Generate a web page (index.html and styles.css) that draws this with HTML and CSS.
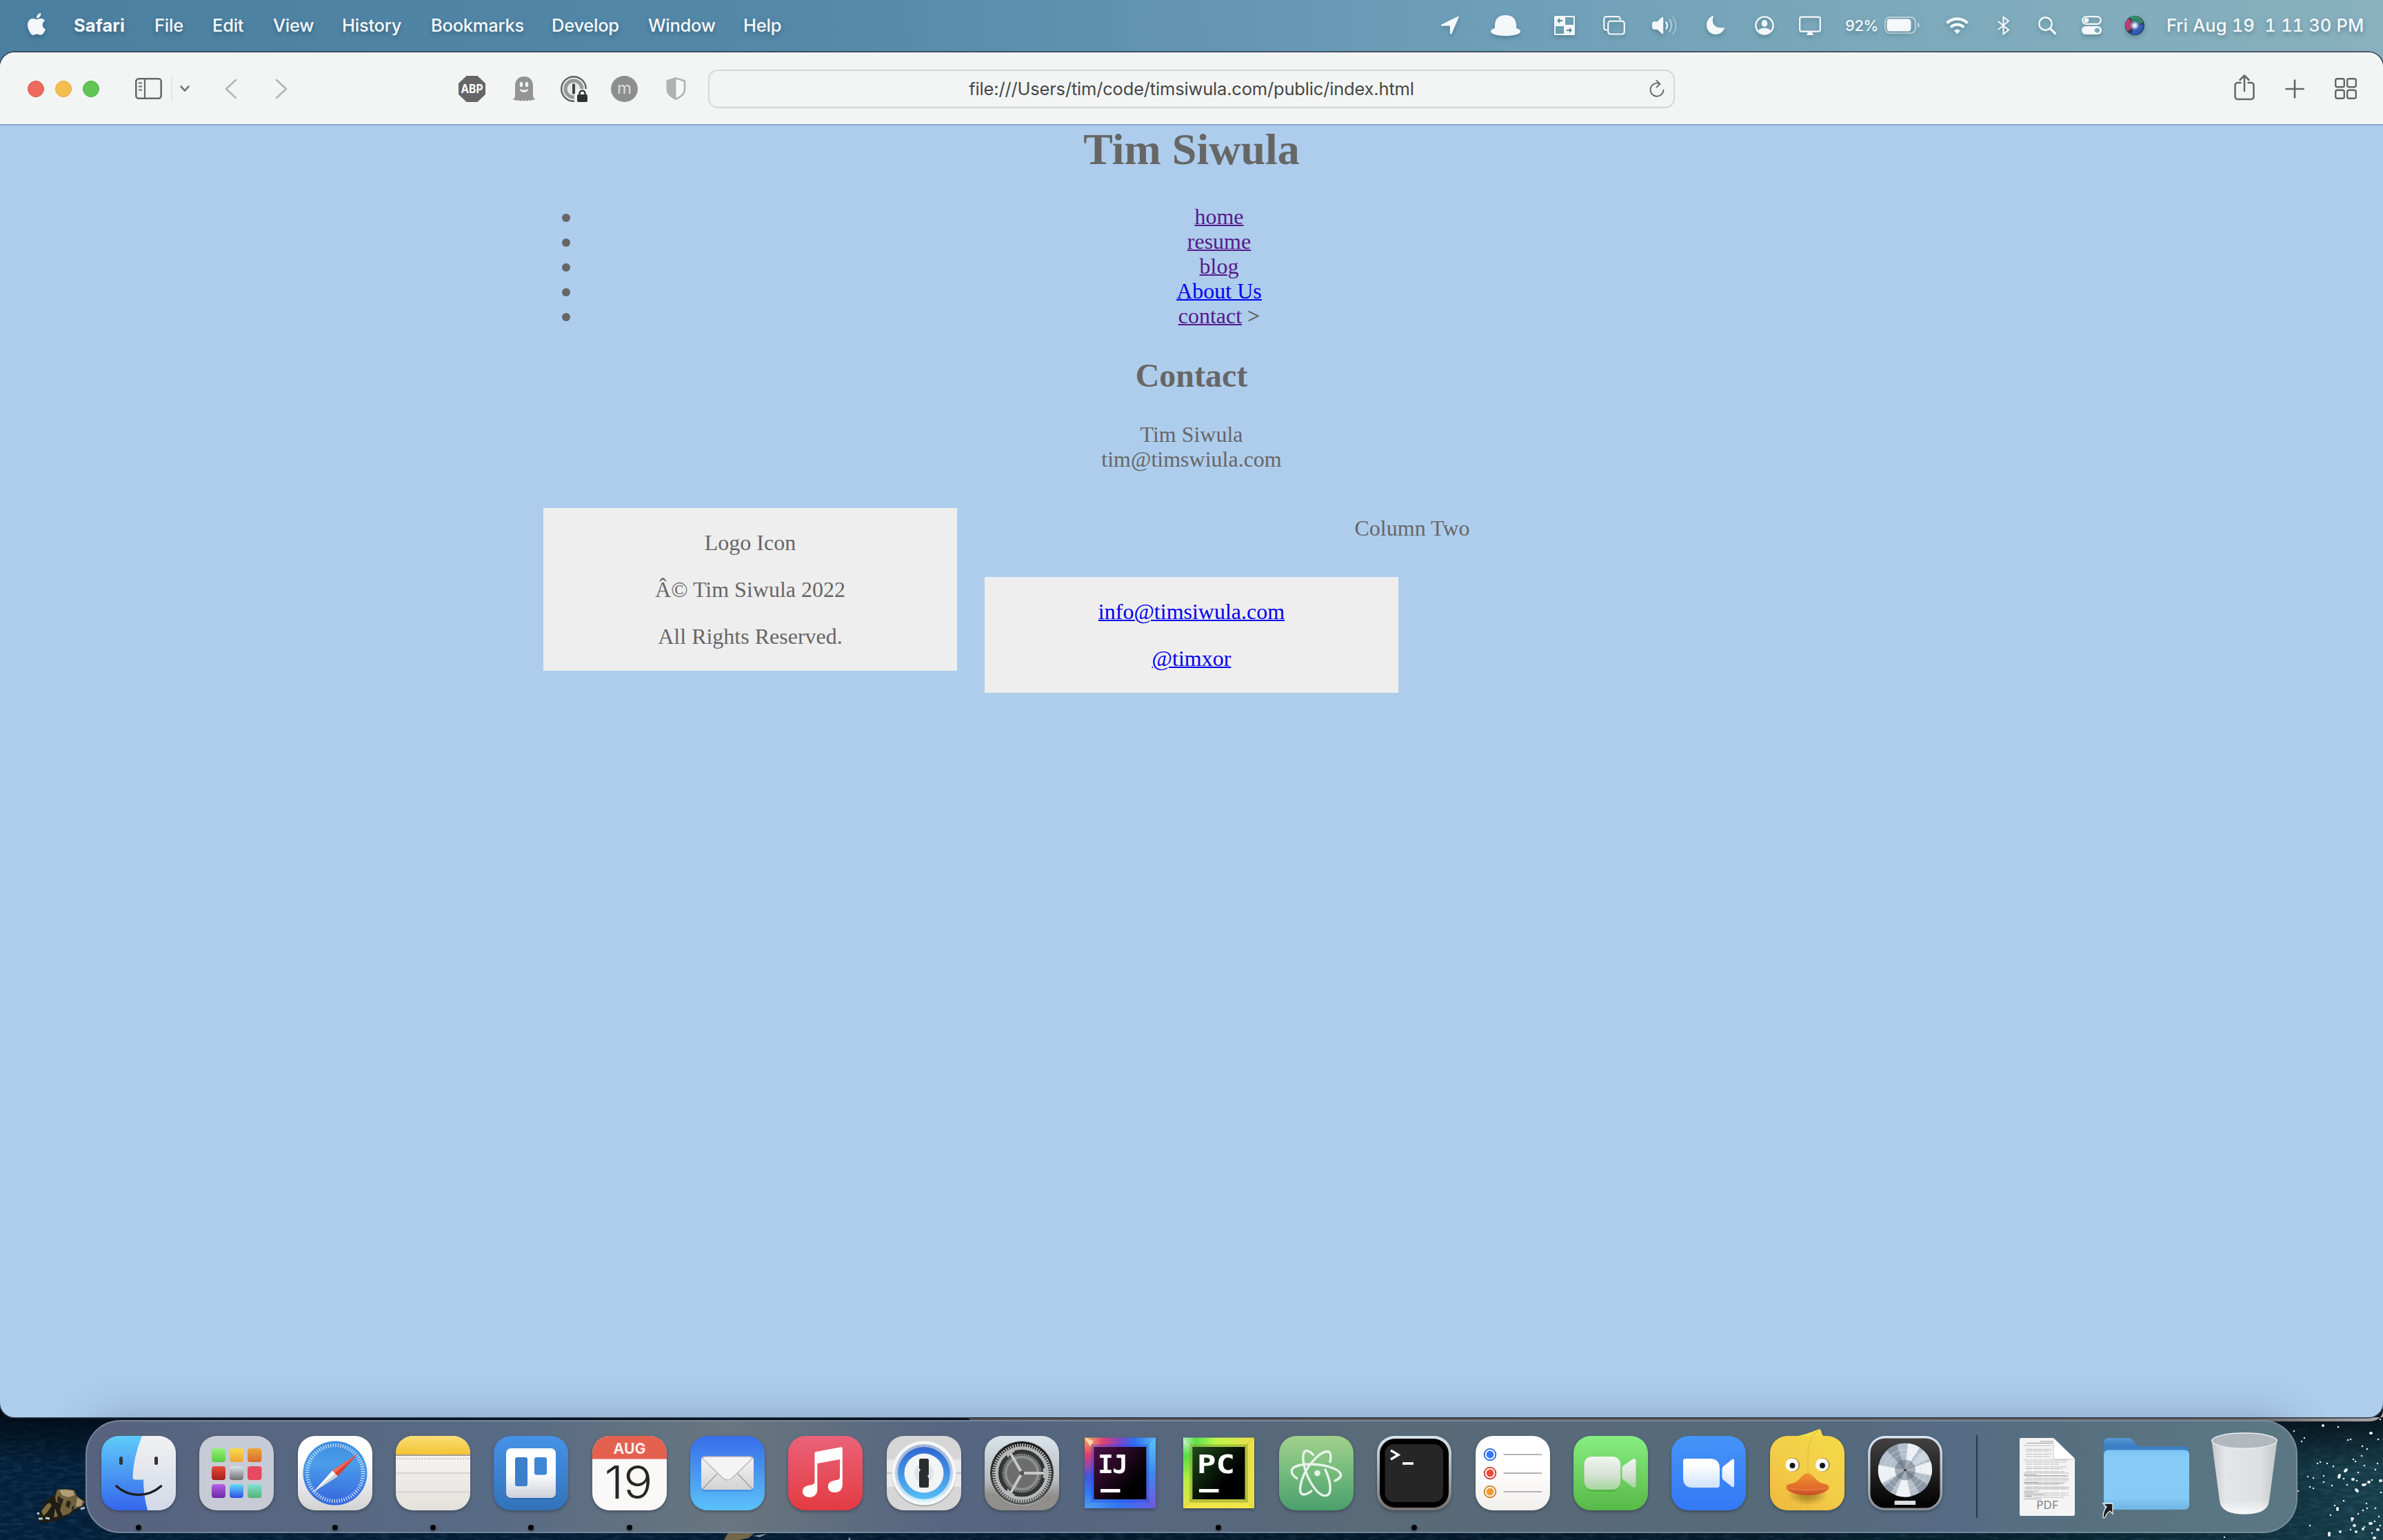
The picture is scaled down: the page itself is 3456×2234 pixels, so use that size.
FILE: index.html
```html
<!DOCTYPE html>
<html lang="en">
<head>
<meta charset="utf-8">
<title>Tim Siwula</title>
<link rel="stylesheet" href="styles.css">
</head>
<body>
<div class="desktop">

<svg class="wallpaper" width="3456" height="190" viewBox="0 2044 3456 190" aria-hidden="true">
  <defs>
    <linearGradient id="sea" x1="0" x2="1"><stop offset="0" stop-color="#03203b"/><stop offset=".3" stop-color="#021d34"/><stop offset=".6" stop-color="#02182a"/><stop offset=".85" stop-color="#04222f"/><stop offset="1" stop-color="#173c49"/></linearGradient>
    <linearGradient id="dim" x1="0" y1="0" x2="0" y2="1"><stop offset="0" stop-color="#000810" stop-opacity=".9"/><stop offset=".45" stop-color="#000810" stop-opacity="0"/></linearGradient>
    <filter id="waves" x="0" y="0" width="1" height="1"><feTurbulence type="fractalNoise" baseFrequency=".06 .22" numOctaves="3" seed="4"/><feColorMatrix values="0 0 0 0 .2  0 0 0 0 .42  0 0 0 0 .58  .9 0 0 0 -.36"/></filter>
    <linearGradient id="edge" x1="0" x2="1"><stop offset="0" stop-color="#605d5b"/><stop offset=".9" stop-color="#75706d"/><stop offset="1" stop-color="#a9a9a8"/></linearGradient>
  </defs>
  <rect y="2044" width="3456" height="190" fill="url(#sea)"/>
  <rect y="2044" width="3456" height="190" filter="url(#waves)" opacity=".35"/>
  <rect y="2044" width="3456" height="190" fill="url(#dim)"/>
  <path d="M54 2204l4-10 6-12 8-10 8-4 3-8 12 0 13 1 3 8 9 5 4 1-1 8-10 6-8 6-12 6-10 5-12 2-10 1z" fill="#201d17"/>
  <path d="M83 2161l13-1 12 2 3 8 8 6 4 2-4 7-12 4-7 7-9 3-4-8 2-9-8-3-1-8z" fill="#77653f"/>
  <path d="M86 2161l20 1 2 7-9 3-9-3zM112 2172l8 5-2 7-8 2z" fill="#b8a67c"/>
  <path d="M84 2170l8 5-3 9-6-6zM98 2176l5 3-3 9-5-4zM104 2186l5-2-5 8z" fill="#2a251b"/>
  <path d="M60 2192l8-10 4-2 3 4-6 9-6 6zM80 2188l4 12-6 1z" fill="#83703f"/>
  <path d="M56 2203l6 0M66 2202l6 1M54 2196l3-1M117 2189l6-2" stroke="#b9d0d6" stroke-width="3"/>
  <path d="M1050 2234l6-10h38l-8 7-14 3z" fill="#80724f"/>
  <path d="M1092 2228l20-3-10 5zM1230 2234l2-5 2 5z" fill="#8ea3a6"/>
  <path d="M1403 2056h2053v-12c0 12-8 18-22 18H1409z" fill="url(#edge)"/>
  <g stroke="#e9f3f5" stroke-linecap="round" fill="none">
    <path stroke-width="2.6" d="M3342 2086h0M3327 2076h0M3355 2144h0M3347 2142h0M3370 2141h0M3361 2123h0M3365 2121h0M3375 2123h0M3384 2127h0M3405 2089h0M3409 2088h0M3413 2117h0M3416 2120h0M3425 2112h0M3426 2098h0M3449 2088h0M3448 2123h0M3391 2070h0M3452 2059h0M3350 2157h0M3355 2159h0M3370 2150h0M3382 2155h0M3333 2163h0M3399 2145h0M3431 2153h0M3440 2147h0M3445 2132h0M3418 2148h0M3350 2213h0M3380 2198h0M3399 2177h0M3386 2184h0M3411 2206h0M3420 2196h0M3427 2191h0M3432 2181h0M3444 2207h0M3450 2200h0M3226 2230h0M3420 2136h0M3429 2126h0M3453 2165h0M3433 2188h0M3440 2224h0M3429 2215h0M3409 2219h0M3452 2213h0M3445 2188h0M3433 2102h0M3338 2091h0M3404 2154h0"/>
    <path stroke-width="4" d="M3392 2143l1-3M3401 2134l2-2M3412 2146h1M3427 2154h2M3417 2161l2 2M3438 2079h1M3369 2068h0M3435 2150h1M3390 2188v2M3411 2203h1M3414 2213h1M3417 2222h0M3437 2210h2M3448 2219h1M3378 2224v3M3443 2231h1M3427 2218h0M3394 2222h0M3452 2148h1"/>
  </g>
</svg>

<header class="menubar">
  <nav class="menus">
    <svg width="26" height="32" viewBox="2.2 0 19.6 24" fill="currentColor"><path d="M12.152 6.896c-.948 0-2.415-1.078-3.96-1.04-2.04.027-3.91 1.183-4.961 3.014-2.117 3.675-.546 9.103 1.519 12.09 1.013 1.454 2.208 3.09 3.792 3.039 1.52-.065 2.09-.987 3.935-.987 1.831 0 2.35.987 3.96.948 1.637-.026 2.676-1.48 3.676-2.948 1.156-1.688 1.636-3.325 1.662-3.415-.039-.013-3.182-1.221-3.22-4.857-.026-3.04 2.48-4.494 2.597-4.559-1.429-2.09-3.623-2.324-4.39-2.376-2-.156-3.675 1.09-4.61 1.09zM15.53 3.83c.843-1.012 1.4-2.427 1.245-3.83-1.207.052-2.662.805-3.532 1.818-.78.896-1.454 2.338-1.273 3.714 1.338.104 2.715-.688 3.559-1.701"/></svg>
    <span class="app-name">Safari</span><span>File</span><span>Edit</span><span>View</span><span>History</span><span>Bookmarks</span><span>Develop</span><span>Window</span><span>Help</span>
  </nav>
  <div class="status">
    <svg width="26" height="28" viewBox="0 0 26 28" fill="currentColor"><path d="M24 1c1.500-.6 2 .3 1.500 1.600L15.500 25.500c-.8 1.600-2.700 1.300-2.700-.5V14.500H1.500C-.2 14.500-.5 13 1 12.200z"/></svg>
    <svg width="43" height="30" viewBox="0 0 43 30" fill="currentColor"><path d="M6 19V15C6 5 12 0 21.500 0S37 5 37 15v4c4 1 6 2.500 6 4.500 0 4-10 6.500-21.500 6.500S0 27.500 0 23.500C0 21.500 2 20 6 19z"/></svg>
    <svg width="30" height="28" viewBox="0 0 30 28"><rect width="30" height="28" rx="1.500" fill="#f2f7f9"/><path d="M16 2h12v11H16zM2 15h12v11H2z" fill="#6c9fb3"/><path d="M4 7l4-4v3h4v2H8v3zM26 21l-4-4v3h-4v2h4v3z" fill="#4f88a2"/></svg>
    <svg width="32" height="28" viewBox="0 0 32 28" fill="none" stroke="currentColor" stroke-width="2.200"><path d="M6 20.500H4.500A3.300 3.300 0 0 1 1.200 17.200V4.500A3.300 3.300 0 0 1 4.500 1.200h17A3.300 3.300 0 0 1 24.800 4.500V6"/><rect x="7.200" y="7.700" width="23.600" height="18.800" rx="3.400"/></svg>
    <svg width="37" height="28" viewBox="0 0 37 28" fill="currentColor"><path d="M0 12c0-2.500 1-3.800 3.500-3.800h4L14 2.200c1.200-1 2.200-.6 2.200 1v21.600c0 1.600-1 2-2.200 1l-6.500-6h-4C1 19.800 0 18.500 0 16z"/><g fill="none" stroke="currentColor" stroke-width="2.400" stroke-linecap="round"><path d="M20.500 9.500q3 4.500 0 9"/><path d="M25.500 5.500q5.500 8.500 0 17" opacity=".5"/><path d="M30.500 2q8 12 0 24.500" opacity=".3"/></g></svg>
    <svg width="26" height="27" viewBox="0 0 26 27" fill="currentColor"><path d="M8.500.3c1-.7 1.800 0 1.400 1C6.500 10 11 18.500 24.500 17c1.200-.1 1.700.6 1.200 1.600A14 14 0 0 1 13.500 27C6 27 0 21.500 0 13.500 0 7.500 3.500 2.500 8.500.3z"/></svg>
    <svg width="28" height="28" viewBox="0 0 28 28"><circle cx="14" cy="14" r="12.600" fill="none" stroke="currentColor" stroke-width="2.400"/><ellipse cx="14" cy="11" rx="4.300" ry="5" fill="currentColor"/><path d="M5 22q2-4.500 9-4.500t9 4.500q-4 4.500-9 4.500T5 22z" fill="currentColor"/></svg>
    <svg width="32" height="28" viewBox="0 0 32 28"><rect x="1.200" y="1.700" width="29.600" height="21" rx="2.600" fill="none" stroke="currentColor" stroke-width="2.200"/><path d="M12.500 23.500h7v3h1.500V28H11v-1.500h1.500z" fill="currentColor"/></svg>
    <span class="percent">92%</span>
    <svg width="51" height="25" viewBox="0 0 51 25"><rect x="1" y="1" width="44" height="23" rx="7" fill="none" stroke="currentColor" stroke-width="2" opacity=".5"/><rect x="3.500" y="3.500" width="35" height="18" rx="4.500" fill="currentColor"/><path d="M48 8.500q3 1 3 4t-3 4z" fill="currentColor" opacity=".5"/></svg>
    <svg width="33" height="26" viewBox="0 0 33 26"><g fill="none" stroke="currentColor" stroke-width="4.200"><path d="M1.500 9.500a21.500 21.500 0 0 1 30 0"/><path d="M7 15.500a13.500 13.500 0 0 1 19 0"/></g><path d="M16.500 25.500l-4.500-5q4.500-4 9 0z" fill="currentColor"/></svg>
    <svg width="18" height="28" viewBox="0 0 18 28" fill="none" stroke="currentColor" stroke-width="2.200" stroke-linejoin="round"><path d="M1 8l15 12.500-7.500 6V1.500l7.500 6L1 20"/></svg>
    <svg width="26" height="26" viewBox="0 0 26 26" fill="none" stroke="currentColor"><circle cx="10.500" cy="10.500" r="9.200" stroke-width="2.500"/><path d="M17.500 17.500l7 7" stroke-width="3.200" stroke-linecap="round"/></svg>
    <svg width="29" height="27" viewBox="0 0 29 27"><rect x="1.200" y="1.200" width="26.600" height="10.600" rx="5.300" fill="none" stroke="currentColor" stroke-width="2.200"/><circle cx="6.800" cy="6.500" r="3.500" fill="currentColor"/><rect y="15" width="29" height="12" rx="6" fill="currentColor"/><circle cx="22.500" cy="21" r="3.600" fill="#7ba9bb"/></svg>
    <svg width="28" height="28" viewBox="0 0 28 28"><defs><radialGradient id="siri"><stop offset="0" stop-color="#fff"/><stop offset=".25" stop-color="#c9d6ef"/><stop offset=".6" stop-color="#5b6f9c" stop-opacity=".5"/><stop offset="1" stop-color="#223" stop-opacity=".1"/></radialGradient></defs><circle cx="14" cy="14" r="14" fill="#2c3d5c"/><path d="M14 14L5 4A13 13 0 0 0 4 22z" fill="#e03a6c"/><path d="M14 14L7 2a13 13 0 0 1 19 8z" fill="#2e9468"/><path d="M14 14l12-2a13 13 0 0 1-17 14z" fill="#2a62d6"/><circle cx="14" cy="14" r="11" fill="url(#siri)"/></svg>
    <span class="clock">Fri Aug 19&nbsp; 1 11 30 PM</span>
  </div>
</header>

<section class="window">
  <div class="toolbar">
    <div class="tools-left">
      <div class="lights"><i class="light red"></i><i class="light yellow"></i><i class="light green"></i></div>
      <svg class="sidebar" width="39" height="31" viewBox="0 0 39 31" fill="none" stroke="#69696a" stroke-width="2.600"><rect x="1.300" y="1.300" width="36.400" height="28.400" rx="4"/><path d="M14 1v29M5 7.500h5M5 12.500h5M5 17.500h5" stroke-width="2.200"/></svg>
      <i class="divider"></i>
      <svg class="caret" width="14" height="10" viewBox="0 0 14 10" fill="none" stroke="#77777b" stroke-width="2.600" stroke-linecap="round" stroke-linejoin="round"><path d="M1.500 1.500L7 7.500l5.500-6"/></svg>
      <svg class="back" width="18" height="30" viewBox="0 0 18 30" fill="none" stroke="#b3b4b4" stroke-width="2.600" stroke-linecap="round" stroke-linejoin="round"><path d="M16 2L2 15l14 13"/></svg>
      <svg class="forward" width="18" height="30" viewBox="0 0 18 30" fill="none" stroke="#b3b4b4" stroke-width="2.600" stroke-linecap="round" stroke-linejoin="round"><path d="M2 2l14 13L2 28"/></svg>
      <svg class="adblock" width="39" height="38" viewBox="0 0 39 38"><path d="M11.500 0h16L39 11v16L27.500 38h-16L0 27V11z" fill="#666"/><text x="19.500" y="25" text-anchor="middle" textLength="32" lengthAdjust="spacingAndGlyphs" font-size="18" font-weight="700" fill="#fff">ABP</text></svg>
      <svg class="ghost" width="32" height="36" viewBox="0 0 32 36"><path d="M3 14C3 5 8 0 16 0s13 5 13 14v13q0 4 3 6-1 1.500-4 .5-2 2.500-5 .5-2 3-4 .5l-3 1-3-1q-3 2.500-5-.5-3 2-4 0-3 .5-4-1 3-2 3-6z" fill="#949494"/><ellipse cx="12" cy="11.500" rx="2.300" ry="3.800" fill="#f0f1f1"/><ellipse cx="20" cy="11.500" rx="2.300" ry="3.800" fill="#f0f1f1"/><path d="M9.500 18q6.500 3 13 0-1.500 5-6.500 5t-6.500-5z" fill="#f0f1f1"/></svg>
      <svg class="onepass" width="39" height="38" viewBox="0 0 39 38"><circle cx="19" cy="19" r="17.800" fill="#e6e7e7" stroke="#636465" stroke-width="2.400"/><circle cx="19" cy="19" r="12" fill="none" stroke="#969797" stroke-width="5"/><path d="M20 38V26l4-7h15v19z" fill="#f3f4f4"/><rect x="17" y="11.500" width="4" height="15" rx="1" fill="#454545"/><rect x="24" y="27" width="15" height="11" rx="2" fill="#323233"/><path d="M27.500 28v-2.500a4 4 0 0 1 8 0V28" fill="none" stroke="#323233" stroke-width="2.400"/></svg>
      <svg class="momentum" width="39" height="38" viewBox="0 0 39 38"><ellipse cx="19.500" cy="19" rx="19.500" ry="19" fill="#8d8e8e"/><text x="19.500" y="25.500" text-anchor="middle" font-size="24" fill="#dcdcdc">m</text></svg>
      <svg class="shield" width="29" height="33" viewBox="0 0 29 33"><path d="M14.500 1.500L27 5.500V18q0 8-12.500 13.500Q2 26 2 18V5.500z" fill="#f6f7f7" stroke="#b0b1b1" stroke-width="2.600"/><path d="M14.500 0v33Q.7 27 .7 18V4.500z" fill="#b0b1b1"/></svg>
    </div>
    <div class="address">
      <span class="url">file:///Users/tim/code/timsiwula.com/public/index.html</span>
      <svg class="reload" width="24" height="26" viewBox="0 0 24 26" fill="none" stroke="#6c6d6e" stroke-width="1.900" stroke-linecap="round" stroke-linejoin="round"><path d="M16.500 5.800A9.500 9.500 0 1 0 21.500 14.500M11.500 1l5 4.800-5 4.700"/></svg>
    </div>
    <div class="tools-right">
      <svg class="share" width="30" height="38" viewBox="0 0 30 38" fill="none" stroke="#656667" stroke-width="2.500" stroke-linecap="round" stroke-linejoin="round"><path d="M9.500 12H5a3.500 3.500 0 0 0-3.500 3.500v17A3.500 3.500 0 0 0 5 36h20a3.500 3.500 0 0 0 3.500-3.500v-17A3.500 3.500 0 0 0 25 12h-4.500M15 24V1.500M8.500 8L15 1.500 21.500 8"/></svg>
      <svg width="28" height="28" viewBox="0 0 28 28" fill="none" stroke="#656667" stroke-width="2.700" stroke-linecap="round"><path d="M14 1.500v25M1.500 14h25"/></svg>
      <svg width="32" height="31" viewBox="0 0 32 31" fill="none" stroke="#656667" stroke-width="2.400"><rect x="1.200" y="1.200" width="12.600" height="12" rx="2.500"/><rect x="18.200" y="1.200" width="12.600" height="12" rx="2.500"/><rect x="1.200" y="17.800" width="12.600" height="12" rx="2.500"/><rect x="18.200" y="17.800" width="12.600" height="12" rx="2.500"/></svg>
    </div>
  </div>
  <main class="page">
    <h1>Tim Siwula</h1>
    <ul class="nav">
      <li><a class="visited" href="#">home</a></li>
      <li><a class="visited" href="#">resume</a></li>
      <li><a class="visited" href="#">blog</a></li>
      <li><a href="#">About Us</a></li>
      <li><a class="visited" href="#">contact</a> <b>&gt;</b></li>
    </ul>
    <h2>Contact</h2>
    <p class="details">Tim Siwula<br>tim@timswiula.com</p>
    <footer class="footer">
      <div class="card"><p>Logo Icon</p><p>Â© Tim Siwula 2022</p><p>All Rights Reserved.</p></div>
      <div class="column-two">
        <p class="heading">Column Two</p>
        <div class="card"><p><a href="#">info@timsiwula.com</a></p><p><a href="#">@timxor</a></p></div>
      </div>
    </footer>
  </main>
</section>

<footer class="dock">
<div class="apps">

<div class="app running"><svg viewBox="0 0 108 108"><defs><linearGradient id="fb" x1="0" y1="0" x2="0" y2="1"><stop offset="0" stop-color="#5fcbf9"/><stop offset="1" stop-color="#3566ec"/></linearGradient><linearGradient id="fw" x1="0" y1="0" x2="0" y2="1"><stop offset="0" stop-color="#f1f1f2"/><stop offset="1" stop-color="#d2dae7"/></linearGradient><clipPath id="tile"><rect width="108" height="108" rx="25"/></clipPath></defs><g clip-path="url(#tile)"><rect width="108" height="108" fill="url(#fb)"/><path d="M59 0Q46 32 45.500 60q0 3.500 4 3.500H61Q61 86 67 108h41V0z" fill="url(#fw)"/></g><rect x="26" y="30" width="5" height="12" rx="2.500" fill="#333"/><rect x="77" y="30" width="5" height="12" rx="2.500" fill="#333"/><path d="M22 73q14 12.500 32 12.500T86.500 73" fill="none" stroke="#1e1e20" stroke-width="3.600" stroke-linecap="round"/></svg></div>

<div class="app"><svg viewBox="0 0 108 108"><defs>
<linearGradient id="l1" x1="0" y1="0" x2="0" y2="1"><stop offset="0" stop-color="#93f377"/><stop offset="1" stop-color="#5bcb3e"/></linearGradient>
<linearGradient id="l2" x1="0" y1="0" x2="0" y2="1"><stop offset="0" stop-color="#fadb4a"/><stop offset="1" stop-color="#eda53a"/></linearGradient>
<linearGradient id="l3" x1="0" y1="0" x2="0" y2="1"><stop offset="0" stop-color="#eda436"/><stop offset="1" stop-color="#d96c31"/></linearGradient>
<linearGradient id="l4" x1="0" y1="0" x2="0" y2="1"><stop offset="0" stop-color="#e94b3a"/><stop offset="1" stop-color="#a32118"/></linearGradient>
<linearGradient id="l5" x1="0" y1="0" x2="0" y2="1"><stop offset="0" stop-color="#dbe5ee"/><stop offset="1" stop-color="#70706e"/></linearGradient>
<linearGradient id="l7" x1="0" y1="0" x2="0" y2="1"><stop offset="0" stop-color="#b45fe8"/><stop offset="1" stop-color="#692aa5"/></linearGradient>
<linearGradient id="l8" x1="0" y1="0" x2="0" y2="1"><stop offset="0" stop-color="#63dcfc"/><stop offset="1" stop-color="#2a4fe0"/></linearGradient>
<linearGradient id="l9" x1="0" y1="0" x2="0" y2="1"><stop offset="0" stop-color="#83e0d6"/><stop offset="1" stop-color="#50b473"/></linearGradient></defs>
<rect width="108" height="108" rx="25" fill="#c7cbd6"/><g><rect x="18" y="18" width="20" height="20" rx="4" fill="url(#l1)"/><rect x="44" y="18" width="20" height="20" rx="4" fill="url(#l2)"/><rect x="70" y="18" width="20.500" height="20" rx="4" fill="url(#l3)"/><rect x="18" y="44" width="20" height="20" rx="4" fill="url(#l4)"/><rect x="44" y="44" width="20" height="20" rx="4" fill="url(#l5)"/><rect x="70" y="44" width="20.500" height="20" rx="4" fill="#e74a5f"/><rect x="18" y="70" width="20" height="20" rx="4" fill="url(#l7)"/><rect x="44" y="70" width="20" height="20" rx="4" fill="url(#l8)"/><rect x="70" y="70" width="20.500" height="20" rx="4" fill="url(#l9)"/></g></svg></div>

<div class="app running"><svg viewBox="0 0 108 108"><defs><linearGradient id="s1" x1="0" y1="0" x2="0" y2="1"><stop offset=".3" stop-color="#fff"/><stop offset="1" stop-color="#d3d3d3"/></linearGradient><linearGradient id="s2" x1="0" y1="0" x2="0" y2="1"><stop offset="0" stop-color="#3a8de0"/><stop offset=".35" stop-color="#4b9de9"/><stop offset="1" stop-color="#3465dd"/></linearGradient></defs><rect width="108" height="108" rx="25" fill="url(#s1)"/><circle cx="54" cy="54" r="46.500" fill="url(#s2)"/><circle cx="54" cy="54" r="40.500" fill="none" stroke="#dcebfb" stroke-width="5.500" stroke-dasharray="1.200 2.334"/><path d="M87 26L58 58.500 50 50.500z" fill="#d8402f"/><path d="M87 26L54 54l-4-4z" fill="#f0695c"/><path d="M22 82l28-31.500 8 8z" fill="#d0d2d6"/><path d="M22 82l28-31.500 4 4z" fill="#fff"/></svg></div>

<div class="app running"><svg viewBox="0 0 108 108"><defs><linearGradient id="n1" x1="0" y1="0" x2="0" y2="1"><stop offset="0" stop-color="#f9df74"/><stop offset="1" stop-color="#f5c335"/></linearGradient><linearGradient id="n2" x1="0" y1="0" x2="0" y2="1"><stop offset="0" stop-color="#fafaf9"/><stop offset="1" stop-color="#e3e1db"/></linearGradient></defs><g clip-path="url(#tile)"><rect width="108" height="108" fill="url(#n2)"/><rect width="108" height="27" fill="url(#n1)"/><path d="M0 28h108" stroke="#a59f91" stroke-width="2"/><path d="M1 33h107" stroke="#c6c5c3" stroke-width="2" stroke-dasharray="2 2"/><path d="M0 54h108M0 81.500h108" stroke="#cecccc" stroke-width="1.400"/></g></svg></div>

<div class="app running"><svg viewBox="0 0 108 108"><defs><linearGradient id="t1" x1="0" y1="0" x2="0" y2="1"><stop offset="0" stop-color="#4592e7"/><stop offset="1" stop-color="#3273b9"/></linearGradient><linearGradient id="t2" x1="0" y1="0" x2="0" y2="1"><stop offset=".5" stop-color="#fff"/><stop offset="1" stop-color="#cbcfda"/></linearGradient></defs><rect width="108" height="108" rx="25" fill="url(#t1)"/><rect x="18" y="19" width="72" height="73" rx="7" fill="#1f5793" opacity=".4"/><rect x="18" y="18" width="72" height="72" rx="7" fill="url(#t2)"/><rect x="31" y="31" width="18" height="42" rx="3" fill="#3b7fcd"/><rect x="59" y="31" width="18" height="25.500" rx="3" fill="#3f86d6"/></svg></div>

<div class="app running"><svg viewBox="0 0 108 108"><g clip-path="url(#tile)"><rect width="108" height="108" fill="#faf9f8"/><rect width="108" height="33.500" fill="#e5614f"/></g><text x="54" y="26" text-anchor="middle" textLength="47" lengthAdjust="spacingAndGlyphs" font-size="22" font-weight="700" fill="#fdf1ef">AUG</text><text x="52.500" y="91" text-anchor="middle" textLength="70" lengthAdjust="spacingAndGlyphs" font-size="66" font-weight="300" fill="#262626">19</text></svg></div>

<div class="app"><svg viewBox="0 0 108 108"><defs><linearGradient id="m1" x1="0" y1="0" x2="0" y2="1"><stop offset="0" stop-color="#376dea"/><stop offset="1" stop-color="#5bc1f8"/></linearGradient><linearGradient id="m2" x1="0" y1="0" x2="0" y2="1"><stop offset="0" stop-color="#f5f5f5"/><stop offset="1" stop-color="#d3d3d4"/></linearGradient></defs><rect width="108" height="108" rx="25" fill="url(#m1)"/><rect x="16" y="32" width="76" height="49" rx="5" fill="#2b6fc0" opacity=".35"/><rect x="16" y="30" width="76" height="48" rx="4.500" fill="url(#m2)"/><path d="M18 77l21-22M90 77L69 55" stroke="#9d9d9e" stroke-width="1.300"/><path d="M17 32l30 29q7 6 14 0l30-29q-2-2-5-2H22q-3 0-5 2z" fill="#f4f4f4" stroke="#b4b4b5" stroke-width="1.300"/></svg></div>

<div class="app"><svg viewBox="0 0 108 108"><defs><linearGradient id="mu" x1="0" y1="0" x2="0" y2="1"><stop offset="0" stop-color="#ea6379"/><stop offset="1" stop-color="#e33b42"/></linearGradient></defs><rect width="108" height="108" rx="25" fill="url(#mu)"/><path d="M38.500 25q0-1.500 2-2L76.500 16.300q2.300-.4 2.300 1.700V71c0 7-4.500 11-11 11-6 0-10-3.500-10-8.500 0-6 4.500-8 10-9 5.500-1 7.300-1.500 7.300-5V34L42.300 40v38c0 7-5 11-11 11S21 85.500 21 80.500c0-6 4.500-7.800 10-9 5-1 7.500-1.500 7.500-5z" fill="#fff"/></svg></div>

<div class="app"><svg viewBox="0 0 108 108"><defs><linearGradient id="p1" x1="0" y1="0" x2="0" y2="1"><stop offset="0" stop-color="#2f67d2"/><stop offset="1" stop-color="#57bdf6"/></linearGradient><linearGradient id="p2" x1="0" y1="0" x2="0" y2="1"><stop offset="0" stop-color="#a3b6d6"/><stop offset=".5" stop-color="#b9cbe6"/><stop offset="1" stop-color="#d3f1fb"/></linearGradient></defs><rect width="108" height="108" rx="25" fill="#d6d6d6"/><path d="M0 34.500h108v39H0z" fill="#e9e9e9"/><path d="M0 54h108" stroke="#b5b5b5" stroke-width="1.400"/><circle cx="54" cy="56" r="46.500" fill="#777" opacity=".45"/><circle cx="54" cy="54" r="46.500" fill="#f6f7f8"/><circle cx="54" cy="54" r="42" fill="url(#p2)"/><circle cx="54" cy="54" r="38" fill="url(#p1)"/><circle cx="54" cy="54" r="28.500" fill="#f3f4f5"/><circle cx="54" cy="54" r="14" fill="#e2e3e4"/><path d="M49.500 33h9Q61 33 61 35.500V56l-2 2.500 2 2.500v11.500q0 2.500-2.500 2.500h-9Q47 75 47 72.500V52l2-2.500-2-2.500V35.500Q47 33 49.500 33z" fill="#2b2d30"/></svg></div>

<div class="app"><svg viewBox="0 0 108 108"><defs><linearGradient id="g1" x1="0" y1="0" x2="0" y2="1"><stop offset="0" stop-color="#dae4ec"/><stop offset=".6" stop-color="#b7bcbe"/><stop offset=".8" stop-color="#918f8b"/></linearGradient><linearGradient id="g2" x1="0" y1="0" x2="0" y2="1"><stop offset="0" stop-color="#151515"/><stop offset="1" stop-color="#555"/></linearGradient></defs><rect width="108" height="108" rx="25" fill="url(#g1)"/><circle cx="54" cy="54" r="46.500" fill="url(#g2)" stroke="#c3c6c8" stroke-width="1"/><circle cx="54" cy="54" r="40.500" fill="none" stroke="#b9bcbd" stroke-width="5" stroke-dasharray="1.900 1.634"/><circle cx="54" cy="54" r="36.500" fill="#353535" stroke="#b5b8b9" stroke-width="4.500"/><circle cx="54" cy="54" r="27" fill="none" stroke="#989a9a" stroke-width="3" stroke-dasharray="1.600 1.227"/><circle cx="54" cy="54" r="23.500" fill="#6d6d6c" stroke="#8f9190" stroke-width="4"/><path d="M54 54h34M54 54L37.500 25M54 54L37.500 83" stroke="#c6c9ca" stroke-width="4"/><path d="M84 48q3 6 0 12l6 3V45zM44 23q-7 2-10 9l-3-6 8-7zM44 85q-7-2-10-9l-3 6 8 7z" fill="#b5b8b9"/><circle cx="54" cy="54" r="3.200" fill="#555"/></svg></div>

<div class="app"><svg viewBox="0 0 108 108"><defs><linearGradient id="j1" x1="0" x2="1"><stop offset="0" stop-color="#f6c65a"/><stop offset=".25" stop-color="#e2416f"/><stop offset=".5" stop-color="#7c46c8"/><stop offset=".7" stop-color="#2f6ff0"/><stop offset="1" stop-color="#54b9f3"/></linearGradient><linearGradient id="j2" x1="0" y1="0" x2="0" y2="1"><stop offset="0" stop-color="#f6a94b"/><stop offset=".25" stop-color="#e13b73"/><stop offset=".55" stop-color="#4257e0"/><stop offset=".8" stop-color="#327cf3"/><stop offset="1" stop-color="#4aa0f0"/></linearGradient><linearGradient id="j3" x1="0" y1="0" x2="0" y2="1"><stop offset="0" stop-color="#5bc5f3"/><stop offset=".5" stop-color="#3f87f2"/><stop offset="1" stop-color="#7556df"/></linearGradient><linearGradient id="j4" x1="0" x2="1"><stop offset="0" stop-color="#4aa0f0"/><stop offset=".5" stop-color="#3473ee"/><stop offset="1" stop-color="#6a5be6"/></linearGradient><linearGradient id="j5" x1="0" y1="0" x2=".8" y2=".7"><stop offset="0" stop-color="#4d1048"/><stop offset="1" stop-color="#000"/></linearGradient></defs><path d="M3 2.500h103L92 16H16.500z" fill="url(#j1)"/><path d="M3 2.500v102.500l13.500-13V16z" fill="url(#j2)"/><path d="M106 2.500v102.500L92 92V16z" fill="url(#j3)"/><path d="M3 105h103L92 92H16.500z" fill="url(#j4)"/><path d="M14.500 14.500h80v80h-80z" fill="none" stroke="#2346e8" stroke-opacity=".35" stroke-width="4.500"/><path d="M3 2.500l13 5-5 8z" fill="#fbe5c0" opacity=".8"/><rect x="16.500" y="16" width="76" height="76" fill="url(#j5)"/><text class="mono" x="22" y="54" font-size="38" textLength="44">IJ</text><path d="M26 77h28.500v5H26z" fill="#fff"/></svg></div>

<div class="app running"><svg viewBox="0 0 108 108"><defs><linearGradient id="y1" x1="0" x2="1"><stop offset="0" stop-color="#b9f3b0"/><stop offset=".18" stop-color="#5be04c"/><stop offset=".45" stop-color="#bdf64e"/><stop offset="1" stop-color="#efdf48"/></linearGradient><linearGradient id="y2" x1="0" y1="0" x2="0" y2="1"><stop offset="0" stop-color="#d5f7d8"/><stop offset=".25" stop-color="#55dc48"/><stop offset=".6" stop-color="#b8ee45"/><stop offset="1" stop-color="#e9e04a"/></linearGradient><linearGradient id="y5" x1="0" y1="0" x2=".7" y2=".6"><stop offset="0" stop-color="#1e4d1b"/><stop offset="1" stop-color="#000"/></linearGradient></defs><path d="M3 2.500h103L92 16H16.500z" fill="url(#y1)"/><path d="M3 2.500v102.500l13.500-13V16z" fill="url(#y2)"/><path d="M106 2.500v102.500L92 92V16z" fill="#e8e347"/><path d="M3 105h103L92 92H16.500z" fill="#f0e64a"/><path d="M14.500 14.500h80v80h-80z" fill="none" stroke="#8ba22e" stroke-opacity=".55" stroke-width="4.500"/><rect x="16.500" y="16" width="76" height="76" fill="url(#y5)"/><text class="mono" x="23" y="54" font-size="38" textLength="55" lengthAdjust="spacingAndGlyphs">PC</text><path d="M26 77h28.500v5H26z" fill="#fff"/></svg></div>

<div class="app"><svg viewBox="0 0 108 108"><defs><linearGradient id="a1" x1="0" y1="0" x2="0" y2="1"><stop offset="0" stop-color="#a2d28c"/><stop offset=".5" stop-color="#74ba7d"/><stop offset="1" stop-color="#4a9f6b"/></linearGradient></defs><rect width="108" height="108" rx="25" fill="url(#a1)"/><g fill="none" stroke="#e8f3e9" stroke-width="3.400" stroke-linecap="round"><path d="M26 61.500C18 57 16 50 21 46c10-7 36-6 52-1 17 5 23 14 8 20"/><path d="M74 37.500C76 30 75 22.500 70 22.500 58 23 39 45 33 64c-4 14-3 21 3 21 3 0 7-2 11-5"/><path d="M49.500 27.500C45 22 40 20 37 23c-5 6-1 26 8 43 8 14 17 23 25 20 6-3 6-18-3-37"/></g><ellipse cx="55.500" cy="54" rx="4.300" ry="4.200" fill="#e8f3e9"/></svg></div>

<div class="app running"><svg viewBox="0 0 108 108"><defs><linearGradient id="k1" x1="0" y1="0" x2="0" y2="1"><stop offset="0" stop-color="#d7e5ee"/><stop offset="1" stop-color="#757270"/></linearGradient></defs><rect width="108" height="108" rx="25" fill="url(#k1)"/><rect x="4" y="4" width="100" height="100" rx="22" fill="#000"/><rect x="11.500" y="12" width="84.500" height="84" rx="13" fill="#262627"/><path d="M20 21l11 6.500-11 6.500" fill="none" stroke="#fff" stroke-width="3.400"/><path d="M37 40h16" stroke="#fff" stroke-width="3.600"/></svg></div>

<div class="app"><svg viewBox="0 0 108 108"><defs><linearGradient id="r1" x1="0" y1="0" x2="0" y2="1"><stop offset=".4" stop-color="#fff"/><stop offset="1" stop-color="#f1efec"/></linearGradient></defs><rect width="108" height="108" rx="25" fill="url(#r1)"/><g fill="none" stroke-width="2"><g stroke="#3673de"><circle cx="21" cy="27" r="8.300"/><circle cx="21" cy="27" r="5.400" fill="#3478f6" stroke="none"/></g><g stroke="#d5483c"><circle cx="21" cy="54" r="8.300"/><circle cx="21" cy="54" r="5.400" fill="#eb4d3d" stroke="none"/></g><g stroke="#d38a30"><circle cx="21" cy="81" r="8.300"/><circle cx="21" cy="81" r="5.400" fill="#ef9a37" stroke="none"/></g></g><path d="M40.500 27H96M40.500 54H96M40.500 81H96" stroke="#b2b2b7" stroke-width="2"/></svg></div>

<div class="app"><svg viewBox="0 0 108 108"><defs><linearGradient id="v1" x1="0" y1="0" x2="0" y2="1"><stop offset="0" stop-color="#86ee80"/><stop offset="1" stop-color="#57b946"/></linearGradient><linearGradient id="v2" x1="0" y1="0" x2="0" y2="1"><stop offset="0" stop-color="#f2f5f1"/><stop offset=".6" stop-color="#d3e0d1"/><stop offset="1" stop-color="#a4d79c"/></linearGradient></defs><rect width="108" height="108" rx="25" fill="url(#v1)"/><rect x="15.500" y="33" width="52.500" height="48" rx="12" fill="#3a9a2f" opacity=".4"/><rect x="15.500" y="30" width="52.500" height="48" rx="11" fill="url(#v2)"/><path d="M70.500 47q0-2 2-4l13-9q5-2.500 5 2.500v35q0 5-5 2.500l-13-10q-2-2-2-4z" fill="url(#v2)"/></svg></div>

<div class="app"><svg viewBox="0 0 108 108"><defs><linearGradient id="z1" x1="0" y1="0" x2="0" y2="1"><stop offset="0" stop-color="#4594f8"/><stop offset="1" stop-color="#3478f6"/></linearGradient><linearGradient id="z2" x1="0" y1="0" x2="0" y2="1"><stop offset=".2" stop-color="#fff"/><stop offset="1" stop-color="#cfe2fd"/></linearGradient></defs><rect width="108" height="108" rx="25" fill="url(#z1)"/><path d="M20 33h36q14 0 14 14v24q0 4-3.500 4H31q-14 0-14-14V36.500Q17 33 20 33zM73.500 48q0-2 2-4l12-9.500q3.500-2.500 3.500 1.500v36q0 4-3.500 1.500l-12-9.500q-2-2-2-4z" fill="url(#z2)"/></svg></div>

<div class="app"><svg viewBox="0 0 108 108"><defs><linearGradient id="d1" x1="1" y1="0" x2=".3" y2="1"><stop offset="0" stop-color="#f5da48"/><stop offset=".6" stop-color="#f3cd48"/><stop offset="1" stop-color="#efbd40"/></linearGradient><linearGradient id="d2" x1="0" y1="0" x2="0" y2="1"><stop offset="0" stop-color="#f1922f"/><stop offset=".7" stop-color="#df6a2c"/><stop offset="1" stop-color="#c44b28"/></linearGradient><radialGradient id="d3"><stop offset=".3" stop-color="#7b5c12" stop-opacity=".5"/><stop offset="1" stop-color="#7b5c12" stop-opacity="0"/></radialGradient></defs><path d="M36 1Q52-2 70-9.500q3-1 4 2 1 6 4.500 8.500z" fill="#f6dc4d"/><rect width="108" height="108" rx="25" fill="url(#d1)"/><path d="M55 108V25Q55 5 70-9" fill="none" stroke="#ddb93e" stroke-width="1"/><ellipse cx="54.500" cy="86" rx="29" ry="15" fill="url(#d3)"/><circle cx="33" cy="42" r="10" fill="#9b7a28"/><circle cx="76.500" cy="42" r="10" fill="#9b7a28"/><circle cx="32" cy="42" r="9.500" fill="#fff"/><circle cx="75.500" cy="42" r="9.500" fill="#fff"/><circle cx="32.500" cy="43" r="4" fill="#161616"/><circle cx="76" cy="43" r="4" fill="#161616"/><path d="M54.500 54c7 0 12 11 19 14 8 2 12 3 12 7 0 5-13 11-31 11s-31-6-31-11 4-5 12-7c7-3 12-14 19-14z" fill="url(#d2)"/><path d="M24 75q30 7 61 0" fill="none" stroke="#e97f39" stroke-width="1.300"/></svg></div>

<div class="app"><svg viewBox="0 0 108 108"><defs><linearGradient id="q1" x1="0" y1="0" x2="0" y2="1"><stop offset="0" stop-color="#dbe8f6"/><stop offset="1" stop-color="#8b8f96"/></linearGradient><linearGradient id="q2" x1="0" y1="0" x2="0" y2="1"><stop offset="0" stop-color="#424242"/><stop offset="1" stop-color="#000"/></linearGradient></defs><rect width="108" height="108" rx="25" fill="url(#q1)"/><rect x="3.500" y="3.500" width="101" height="101" rx="21" fill="url(#q2)"/><circle cx="54" cy="49.500" r="39" fill="#b4bfcc"/><path d="M54 49.500L58 10.700A39 39 0 0 1 75 16.700zM54 49.500L15.500 42A39 39 0 0 0 20 69zM54 49.500L92 57.500A39 39 0 0 0 91 37zM54 49.500L40 86A39 39 0 0 0 62 87.700z" fill="#eef2f7"/><path d="M54 49.500L27 21A39 39 0 0 1 42 12.400zM54 49.500L87 71A39 39 0 0 1 75 82.500zM54 49.500L23 73A39 39 0 0 0 33 82.500z" fill="#8e99a8"/><path d="M54 49.500L80 20.500A39 39 0 0 1 89 32.500z" fill="#cdd5df"/><circle cx="54" cy="49.500" r="23" fill="none" stroke="#dbe2ea" stroke-opacity=".6"/><circle cx="54" cy="49.500" r="30" fill="none" stroke="#e6ebf1" stroke-opacity=".6"/><circle cx="54" cy="49.500" r="15" fill="#525e6b" opacity=".45"/><circle cx="54" cy="49.500" r="1.600" fill="#222"/><rect x="38.600" y="94" width="30.500" height="6" fill="#dbdee3"/></svg></div>
</div>

<i class="dock-line"></i>

<svg class="pdf" width="80" height="113" viewBox="0 0 80 113"><defs><linearGradient id="x1" x1="0" y1="1" x2="1" y2="0"><stop offset=".5" stop-color="#fff"/><stop offset="1" stop-color="#d9d9d9"/></linearGradient></defs><path d="M2 0h47l31 30v81q0 2-2 2H2q-2 0-2-2V2q0-2 2-2z" fill="#f4f4f4"/><path d="M30 5h18M10 7.500h38" stroke="#9b9b9b" stroke-width="1.200"/><g stroke="#b9b9b9" stroke-width="1.200" stroke-dasharray="9 1 14 1"><path d="M9 16.500h37M9 19h37M9 23.500h37M9 27h36M9 35h60M9 38h48M9 42h60M9 44.500h52M9 49h56M9 56h62M9 59h62M9 64h60"/><path d="M9 67h50M9 71h62M9 74h62M9 80h62M9 83h62M9 86h56"/></g><path d="M6 11h40M6 32h64M6 51h66M6 61h66M6 72.500h66" stroke="#cfcfcf" stroke-width="1.600"/><g stroke="#aaa" stroke-width="1.100"><path d="M6 53h18M6 54.500h64M6 64.500h20M6 66h58M6 77h22M6 79h14M6 82h30M6 84.500h12M6 88.500h26"/></g><path d="M50 1v25q0 4 4 4h26z" fill="url(#x1)"/><path d="M49 1v27q0 3 3 3h27" fill="none" stroke="#aaa" stroke-opacity=".5"/><text x="40" y="103" text-anchor="middle" font-size="17" fill="#7b7b7b" class="sans">PDF</text></svg>

<svg class="folder" width="130" height="118" viewBox="-5 0 130 118"><defs><linearGradient id="o1" x1="0" y1="0" x2="0" y2="1"><stop offset="0" stop-color="#5599d3"/><stop offset=".2" stop-color="#3b7fc4"/></linearGradient><linearGradient id="o2" x1="0" y1="0" x2="0" y2="1"><stop offset="0" stop-color="#80c6f4"/><stop offset=".15" stop-color="#87cbf7"/><stop offset=".85" stop-color="#85c9f5"/><stop offset="1" stop-color="#6db3e0"/></linearGradient></defs><path d="M7 0h28q4 0 7 3l5 6q3 3.500 7 3.500h62q8 0 8 8v35H0V8Q0 0 7 0z" fill="url(#o1)"/><path d="M7 17.500h110q7 0 7 7V97q0 7-7 7H7q-7 0-7-7V24.500q0-7 7-7z" fill="url(#o2)"/><path d="M0 91h124M0 94.500h124M0 98h124" stroke="#70b4e2" stroke-opacity=".7" stroke-width="1"/><path d="M-1 95H13v15l-4-4q-5 3-7 9-1 1.500-3 .5Q-1 106 4 100z" fill="#1c1c1e" stroke="#f3f3f3" stroke-width="1.300"/></svg>

<svg class="trash" width="96" height="119" viewBox="0 0 96 119"><defs><linearGradient id="w1" x1="0" x2="1"><stop offset="0" stop-color="#c5c8cb"/><stop offset=".2" stop-color="#e4e5e7"/><stop offset=".75" stop-color="#dedfe1"/><stop offset="1" stop-color="#c3c6c8"/></linearGradient><linearGradient id="w2" x1="0" y1="0" x2="0" y2="1"><stop offset=".8" stop-color="#fff" stop-opacity="0"/><stop offset="1" stop-color="#fff" stop-opacity=".8"/></linearGradient></defs><path d="M.5 12L12 99q2 19.500 36 19.500T84 99L95.500 12z" fill="url(#w1)"/><path d="M.5 12L12 99q2 19.500 36 19.500T84 99L95.500 12z" fill="url(#w2)"/><ellipse cx="48" cy="12" rx="47.300" ry="11.200" fill="#b1b9bf" stroke="#eceef0" stroke-width="1.400"/></svg>
</footer>
</div>
</body>
</html>
```

FILE: styles.css
```css
* { box-sizing: border-box; }
html, body { margin: 0; }
body {
  width: 3456px;
  height: 2234px;
  overflow: hidden;
  font-family: Inter, "Liberation Sans", sans-serif;
  background: #02182a;
}
svg { display: block; overflow: visible; flex: none; }
p, h1, h2, ul { margin: 0; }

.desktop {
  position: relative;
  display: flex;
  flex-direction: column;
  height: 2234px;
  background: linear-gradient(90deg, #4b7f9f 0, #5488a8 1160px, #6c9db7 2060px, #7caabb 2760px, #88b0be 3456px);
}
.wallpaper { position: absolute; left: 0; bottom: 0; }

/* Menu bar */
.menubar {
  flex: none;
  display: flex;
  justify-content: space-between;
  height: 76px;
  padding: 0 33px 3px 40px;
  color: #f4f8fa;
  font-size: 25.500px;
  font-weight: 500;
  letter-spacing: -.25px;
  white-space: nowrap;
  text-shadow: 0 3px 6px rgba(0, 30, 50, .3);
}
.menubar svg { filter: drop-shadow(0 3px 3px rgba(0, 30, 50, .25)); }
.menus {
  display: grid;
  grid-template-columns: 67px 118px 84px 88px 100px 129px 175px 140px 138px auto;
  align-items: center;
}
.menus span { margin-left: -1px; }
.menus svg { margin-top: -4px; }
.menus .app-name { margin-left: 0; font-weight: 700; letter-spacing: .1px; }
.status {
  display: grid;
  grid-template-columns: 72px 92px 71px 71px 79px 70px 64px 67px 57px 89px 75px 59px 63px 63px 60px 281px;
  align-items: center;
}
.percent { font-size: 22px; letter-spacing: -.4px; }
.clock { font-variant-numeric: tabular-nums; letter-spacing: 0; word-spacing: .4px; }

/* Browser window */
.window {
  position: relative;
  flex: none;
  display: flex;
  flex-direction: column;
  height: 1980px;
  border-radius: 21px;
  overflow: hidden;
  background: #aecdec;
  box-shadow: 0 0 0 1.500px #2c3440;
}
.toolbar {
  flex: none;
  display: grid;
  grid-template-columns: 1027px 1402px 1fr;
  align-items: center;
  height: 106px;
  background: #f3f5f4;
  border-top: 1px solid #fff;
  border-bottom: 2px solid #8aa9c8;
}
.tools-left { display: flex; align-items: center; padding-left: 40px; }
.lights { display: flex; gap: 16px; }
.light { width: 24px; height: 24px; border-radius: 50%; border: 1px solid; }
.red { background: #ed6a5f; border-color: #d9574c; }
.yellow { background: #f5bf4f; border-color: #dba63c; }
.green { background: #62c655; border-color: #51ad43; }
.sidebar { margin-left: 52px; }
.divider { width: 2px; height: 36px; margin-left: 13px; background: #e2e4e4; }
.caret { margin-left: 11px; }
.back { margin-left: 51px; }
.forward { margin-left: 55px; }
.adblock { margin-left: 248px; }
.ghost { margin-left: 40px; }
.onepass { margin-left: 37px; }
.momentum { margin-left: 34px; }
.shield { margin-left: 41px; }
.address {
  display: grid;
  grid-template-columns: 1fr auto 1fr;
  align-items: center;
  height: 56px;
  padding: 0 12px;
  border: 2px solid #d5d7d7;
  border-radius: 14px;
  color: #464747;
  font-size: 25.500px;
  letter-spacing: -.18px;
}
.url { grid-column: 2; }
.reload { justify-self: end; }
.tools-right { display: flex; align-items: center; justify-content: flex-end; gap: 44px; padding-right: 38px; }
.share { margin-top: -4px; }

/* Web page */
.page {
  width: 1920px;
  margin: 0 auto;
  color: #666;
  font: 32px/36px "Liberation Serif", serif;
  text-align: center;
}
.page a { color: #00e; text-decoration-thickness: 2px; }
.page a.visited { color: #551a8b; }
.page h1 { margin-bottom: 44px; font-size: 64px; line-height: 70px; }
.nav { padding-left: 80px; list-style: none; }
.nav li { position: relative; }
.nav li::before {
  content: "";
  position: absolute;
  left: -33px;
  top: 14px;
  width: 12px;
  height: 12px;
  border-radius: 50%;
  background: #666;
}
.page h2 { margin: 41px 0 39px; font-size: 48px; line-height: 56px; }
.footer {
  display: grid;
  grid-template-columns: 640px 1280px;
  align-items: start;
  margin-top: 53px;
}
.card {
  display: grid;
  gap: 32px;
  width: 600px;
  margin: 0 20px;
  padding: 32px 0;
  background: #eee;
}
.heading { padding: 11px 0 53px; }

/* Dock */
.dock {
  position: relative;
  flex: none;
  display: flex;
  align-items: flex-start;
  width: 3208px;
  height: 164px;
  margin: 4px 0 0 124px;
  padding: 21px;
  border: 2px solid rgba(140, 155, 175, .6);
  border-radius: 50px;
  background: linear-gradient(90deg, #57637e 0, #586b84 600px, #68767f 930px, #566580 1250px, #57677e 1600px, #596a78 1850px, #566a7a 2450px, #566b84 2700px, #577080 2880px, #5b7884 3208px);
  background-origin: border-box;
  box-shadow: 0 0 60px rgba(20, 30, 50, .28);
}
.apps { display: flex; gap: 34.330px; }
.app { position: relative; width: 108px; height: 108px; filter: drop-shadow(0 2px 2px rgba(0, 0, 0, .3)); }
.app svg { width: 108px; height: 108px; }
.running::after {
  content: "";
  position: absolute;
  left: 50px;
  top: 129px;
  width: 8px;
  height: 8px;
  border-radius: 50%;
  background: #000;
}
.mono { font-family: "DejaVu Sans Mono", monospace; font-weight: 700; fill: #fff; }
.sans { font-family: "Open Sans", sans-serif; }
.dock-line { flex: none; width: 2px; height: 120px; margin: -1px 0 0 49px; background: #1f3a52; }
.pdf { margin: 2.500px 0 0 61px; }
.folder { margin: 3px 0 0 37px; }
.trash { margin: -5px 0 0 31px; }
```
